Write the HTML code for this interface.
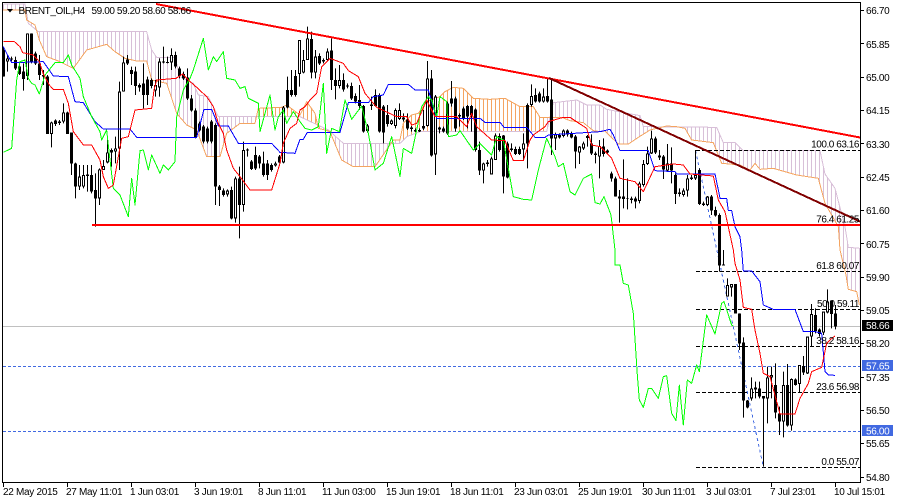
<!DOCTYPE html>
<html><head><meta charset="utf-8"><title>BRENT_OIL,H4</title>
<style>
html,body{margin:0;padding:0;background:#fff;width:900px;height:500px;overflow:hidden}
svg{display:block}
text{font-family:"Liberation Sans",Arial,sans-serif;font-size:10px;fill:#000}
.l{fill:none;stroke-width:3;stroke-linejoin:round;shape-rendering:crispEdges}
</style></head><body>
<svg width="900" height="500" viewBox="0 0 900 500" xmlns="http://www.w3.org/2000/svg">
<defs>
<pattern id="pt" patternUnits="userSpaceOnUse" width="12" height="3"><rect x="9" y="0" width="3" height="3" fill="#d8bfd8"/></pattern>
<pattern id="po" patternUnits="userSpaceOnUse" width="12" height="3"><rect x="9" y="0" width="3" height="3" fill="#f4a460"/></pattern>
<clipPath id="ct"><rect x="0" y="0" width="770" height="1500"/><rect x="960" y="0" width="240" height="1500"/><rect x="1640" y="0" width="1000" height="1500"/></clipPath>
<clipPath id="co"><rect x="770" y="0" width="190" height="1500"/><rect x="1200" y="0" width="440" height="1500"/></clipPath>
<clipPath id="pl"><rect x="3" y="3" width="857" height="479"/></clipPath>
<path id="cl" d="M5 30L75 30 80 60 105 75 118 120 140 170 175 183 220 205 260 150 320 133 345 155 375 175 410 183 440 183 455 240 500 250 530 340 560 375 590 390 620 470 660 470 680 400 720 370 765 370 775 325 845 322 860 315 900 345 920 305 945 340 955 385 975 390 990 395 1025 480 1060 500 1125 500 1180 420 1200 420 1210 370 1235 345 1255 340 1280 305 1320 290 1335 275 1360 262 1390 265 1420 295 1470 298 1515 295 1560 320 1600 320 1620 352 1685 352 1710 362 1750 368 1780 392 1800 395 1815 393 1855 432 1885 432 1915 412 1950 390 2000 378 2030 380 2055 385 2075 420 2140 428 2165 490 2220 495 2250 510 2265 490 2280 508 2320 505 2390 525 2455 535 2475 610 2515 680 2520 750 2538 825 2545 868 2570 875 2578 915 2580 745 2545 742 2535 680 2505 565 2475 522 2460 452 2230 452 2205 428 2170 428 2150 382 1930 380 1920 347 1820 328 1800 315 1760 315 1730 300 1660 308 1640 395 1260 395 1220 410 1200 430 1030 430 985 390 900 350 655 350 625 290 595 285 580 250 540 230 525 172 470 172 455 150 440 95 115 95 85 70 75 12 10 12Z"/>
</defs>
<rect width="900" height="500" fill="#fff"/>
<g clip-path="url(#pl)">
<!-- cloud -->
<g transform="scale(.33333)">
<g clip-path="url(#ct)"><use href="#cl" fill="url(#pt)" fill-rule="nonzero"/></g>
<g clip-path="url(#co)"><use href="#cl" fill="url(#po)" fill-rule="nonzero"/></g>
<polyline class="l" stroke="#d8bfd8" points="10,12 75,12 85,70 115,95 440,95 455,150 470,172 525,172 540,230 580,250 595,285 625,290 655,350 900,350 985,390 1030,430 1200,430 1220,410 1260,395 1640,395 1660,308 1730,300 1760,315 1800,315 1820,328 1920,347 1930,380 2150,382 2170,428 2205,428 2230,452 2460,452 2475,522 2505,565 2535,680 2545,742 2580,745"/>
<polyline class="l" stroke="#f4a460" points="5,30 75,30 80,60 105,75 118,120 140,170 175,183 220,205 260,150 320,133 345,155 375,175 410,183 440,183 455,240 500,250 530,340 560,375 590,390 620,470 660,470 680,400 720,370 765,370 775,325 845,322 860,315 900,345 920,305 945,340 955,385 975,390 990,395 1025,480 1060,500 1125,500 1180,420 1200,420 1210,370 1235,345 1255,340 1280,305 1320,290 1335,275 1360,262 1390,265 1420,295 1470,298 1515,295 1560,320 1600,320 1620,352 1685,352 1710,362 1750,368 1780,392 1800,395 1815,393 1855,432 1885,432 1915,412 1950,390 2000,378 2030,380 2055,385 2075,420 2140,428 2165,490 2220,495 2250,510 2265,490 2280,508 2320,505 2390,525 2455,535 2475,610 2515,680 2520,750 2538,825 2545,868 2570,875 2578,915"/>
</g>
<!-- horizontal levels -->
<g shape-rendering="crispEdges">
<path d="M3 326.5H860" stroke="#c0c0c0" stroke-width="1"/>
<path d="M3 366.5H860M3 431.5H860" stroke="#4169e1" stroke-width="1" stroke-dasharray="3 2"/>
<path d="M696 150.5H860M696 271.5H860M696 309.5H860M696 346.5H860M696 392.5H860M696 467.5H860" stroke="#000" stroke-width="1" stroke-dasharray="4 2"/>
<path d="M695.5 150.5L763.5 467.5" stroke="#4169e1" stroke-width="1" stroke-dasharray="3 3" fill="none"/>
</g>
<!-- candles -->
<g transform="scale(1,.33333)" fill="none" shape-rendering="crispEdges">
<path stroke="#000" stroke-width="1" d="M3.5 140V230M7.5 165V215M11.5 170V185M15.5 170V210M19.5 195V225M23.5 190V272M27.5 100V240M31.5 100V190M35.5 155V195M39.5 165V240M43.5 210V255M47.5 225V402M51.5 365V442M55.5 358V378M59.5 360V375M63.5 310V370M67.5 335V402M71.5 398V525M75.5 488V595M79.5 495V570M83.5 495V565M87.5 495V575M91.5 495V580M95.5 520V680M99.5 505V615M103.5 480V510M107.5 418V490M111.5 445V500M115.5 410V490M119.5 245V510M123.5 170V275M127.5 165V195M131.5 200V255M135.5 200V285M139.5 250V275M143.5 190V325M147.5 230V315M151.5 235V265M155.5 240V290M159.5 175V290M163.5 140V190M167.5 170V190M171.5 145V210M175.5 155V205M179.5 200V235M183.5 215V240M187.5 205V300M191.5 285V335M195.5 325V415M199.5 365V395M203.5 375V430M207.5 380V430M211.5 360V430M215.5 370V615M219.5 555V618M223.5 565V590M227.5 568V590M231.5 560V658M235.5 530V668M239.5 500V715M243.5 425V635M247.5 445V470M251.5 480V510M255.5 440V510M259.5 465V505M263.5 455V530M267.5 480V540M271.5 490V515M275.5 485V500M279.5 465V490M283.5 318V490M287.5 230V325M291.5 210V290M295.5 210V290M299.5 120V260M303.5 150V220M307.5 80V180M311.5 95V235M315.5 150V235M319.5 160V195M323.5 175V190M327.5 145V182M331.5 115V270M335.5 205V298M339.5 195V265M343.5 220V275M347.5 250V265M351.5 248V300M355.5 280V310M359.5 255V330M363.5 315V398M367.5 372V398M371.5 290V330M375.5 268V320M379.5 280V398M383.5 315V430M387.5 315V380M391.5 358V375M395.5 325V385M399.5 310V360M403.5 340V365M407.5 340V390M411.5 378V395M415.5 385V396M419.5 385V396M423.5 330V390M427.5 183V380M431.5 210V470M435.5 285V525M439.5 380V400M443.5 380V398M447.5 305V405M451.5 243V320M455.5 290V395M459.5 340V380M463.5 320V360M467.5 315V385M471.5 315V395M475.5 325V455M479.5 425V525M483.5 488V550M487.5 480V500M491.5 470V523M495.5 400V480M499.5 400V455M503.5 405V580M507.5 425V535M511.5 430V455M515.5 440V465M519.5 440V465M523.5 400V480M527.5 310V505M531.5 253V320M535.5 265V308M539.5 275V308M543.5 265V308M547.5 235V308M551.5 240V465M555.5 398V450M559.5 400V416M563.5 388V412M567.5 388V410M571.5 395V415M575.5 405V505M579.5 438V492M583.5 425V450M587.5 405V440M591.5 403V465M595.5 455V490M599.5 420V535M603.5 415V470M607.5 448V462M611.5 515V545M615.5 530V590M619.5 570V668M623.5 478V625M627.5 535V628M631.5 590V610M635.5 590V625M639.5 545V610M643.5 480V560M647.5 440V495M651.5 392V462M655.5 410V462M659.5 450V480M663.5 465V537M667.5 432V515M671.5 442V550M675.5 520V612M679.5 565V590M683.5 565V590M687.5 525V590M691.5 525V540M695.5 450V540M699.5 505V615M703.5 605V618M707.5 588V618M711.5 585V645M715.5 620V650M719.5 640V815M723.5 750V795M727.5 835V890M731.5 852V890M735.5 852V940M739.5 940V1050M743.5 1012V1253M747.5 1200V1225M751.5 1132V1202M755.5 1145V1195M759.5 1145V1195M763.5 1188V1400M767.5 1100V1270M771.5 1100V1195M775.5 1090V1255M779.5 1220V1305M783.5 1115V1312M787.5 1092V1280M791.5 1135V1292M795.5 1135V1157M799.5 1095V1178M803.5 1068V1125M807.5 1010V1122M811.5 912V1038M815.5 925V1000M819.5 985V1010M823.5 935V1005M827.5 868V940M831.5 905V985M835.5 915V988"/>
<path stroke="#000" stroke-width="3" d="M3.5 150V230M7.5 175V185M11.5 175V178M15.5 180V205M19.5 200V222M23.5 215V237M27.5 100V228M31.5 100V185M35.5 160V190M39.5 190V225M43.5 225V230M47.5 230V402M51.5 367V402M55.5 362V372M59.5 364V369M63.5 337V365M67.5 337V402M71.5 398V490M75.5 490V560M79.5 530V560M83.5 525V560M87.5 524V528M91.5 525V575M95.5 570V595M99.5 508V595M103.5 498V510M107.5 457V487M111.5 450V457M115.5 445V455M119.5 275V445M123.5 187V275M127.5 178V190M131.5 210V222M135.5 215V258M139.5 255V262M143.5 250V285M147.5 238V285M151.5 240V258M155.5 255V272M159.5 185V262M163.5 185V188M167.5 186V189M171.5 165V187M175.5 165V200M179.5 205V228M183.5 222V235M187.5 232V295M191.5 295V332M195.5 332V412M199.5 370V392M203.5 380V425M207.5 385V425M211.5 365V425M215.5 375V560M219.5 560V570M223.5 572V585M227.5 572V583M231.5 570V655M235.5 535V655M239.5 535V615M243.5 450V615M247.5 448V452M251.5 485V507M255.5 465V505M259.5 470V490M263.5 490V525M267.5 490V525M271.5 495V510M275.5 490V497M279.5 470V487M283.5 322V487M287.5 270V322M291.5 270V285M295.5 228V285M299.5 120V222M303.5 180V218M307.5 115V180M311.5 117V218M315.5 170V218M319.5 168V190M323.5 180V184M327.5 155V180M331.5 152V240M335.5 240V258M339.5 240V258M343.5 240V268M347.5 256V260M351.5 258V295M355.5 288V305M359.5 300V318M363.5 318V395M367.5 377V393M371.5 313V318M375.5 285V318M379.5 285V395M383.5 320V397M387.5 345V372M391.5 362V372M395.5 330V378M399.5 330V357M403.5 352V358M407.5 358V385M411.5 383V387M415.5 390V394M419.5 390V394M423.5 378V385M427.5 235V378M431.5 235V467M435.5 290V463M439.5 383V388M443.5 385V395M447.5 310V400M451.5 295V310M455.5 295V385M459.5 345V350M463.5 325V355M467.5 318V350M471.5 318V345M475.5 328V450M479.5 450V512M483.5 490V512M487.5 488V492M491.5 475V523M495.5 407V480M499.5 408V450M503.5 407V530M507.5 430V532M511.5 445V450M515.5 447V462M519.5 447V462M523.5 430V448M527.5 315V430M531.5 288V315M535.5 285V305M539.5 280V305M543.5 290V305M547.5 288V305M551.5 298V415M555.5 403V415M559.5 405V413M563.5 392V408M567.5 392V404M571.5 402V412M575.5 410V455M579.5 440V458M583.5 430V445M587.5 408V414M591.5 430V460M595.5 460V465M599.5 438V470M603.5 440V462M607.5 452V458M611.5 520V535M615.5 535V590M619.5 590V595M623.5 590V597M627.5 595V597M631.5 596V600M635.5 595V605M639.5 550V603M643.5 492V555M647.5 460V492M651.5 415V460M655.5 415V458M659.5 466V472M663.5 470V508M667.5 490V512M671.5 490V512M675.5 525V582M679.5 578V582M683.5 572V585M687.5 535V572M691.5 533V537M695.5 525V535M699.5 510V612M703.5 610V615M707.5 590V615M711.5 590V632M715.5 630V647M719.5 645V797M723.5 793V797M727.5 855V890M731.5 852V862M735.5 852V940M739.5 940V1030M743.5 1028V1202M747.5 1202V1222M751.5 1165V1195M755.5 1163V1168M759.5 1165V1190M763.5 1188V1195M767.5 1132V1195M771.5 1125V1132M775.5 1155V1238M779.5 1240V1265M783.5 1155V1265M787.5 1155V1277M791.5 1137V1277M795.5 1138V1155M799.5 1095V1152M803.5 1098V1118M807.5 1010V1120M811.5 942V1010M815.5 945V993M819.5 988V1002M823.5 935V998M827.5 905V937M831.5 902V942M835.5 940V980"/>
<path stroke="#fff" stroke-width="1" d="M7.5 178V182M27.5 103V225M51.5 370V399M63.5 340V362M79.5 533V557M83.5 528V557M99.5 511V592M103.5 501V507M107.5 460V484M115.5 448V452M119.5 278V442M123.5 190V272M155.5 258V269M159.5 188V259M171.5 168V184M227.5 575V580M235.5 538V652M243.5 453V612M275.5 493V494M283.5 325V484M299.5 123V219M303.5 183V215M307.5 118V177M315.5 173V215M327.5 158V177M339.5 243V255M367.5 380V390M391.5 365V369M395.5 333V375M399.5 333V354M427.5 238V375M435.5 293V460M483.5 493V509M491.5 478V520M495.5 410V477M523.5 433V445M531.5 291V312M543.5 293V302M555.5 406V412M563.5 395V405M579.5 443V455M583.5 433V442M599.5 441V467M639.5 553V600M643.5 495V552M647.5 463V489M651.5 418V457M667.5 493V509M683.5 575V582M687.5 538V569M695.5 528V532M707.5 593V612M727.5 858V887M731.5 855V859M751.5 1168V1192M767.5 1135V1192M771.5 1128V1129M783.5 1158V1262M791.5 1140V1274M799.5 1098V1149M807.5 1013V1117M811.5 945V1007M823.5 938V995M827.5 908V934"/>
</g>
<!-- ichimoku lines -->
<g transform="scale(.33333)">
<polyline class="l" stroke="#0000ff" points="10,140 20,160 35,188 130,185 160,228 205,230 225,305 250,308 285,365 310,387 390,387 410,412 590,412 612,328 635,328 655,378 685,378 715,430 815,430 840,457 885,460 900,418 910,418 922,397 1020,397 1045,308 1105,308 1120,290 1150,285 1165,253 1225,253 1245,270 1285,270 1310,355 1440,355 1455,367 1500,367 1512,382 1580,382 1605,412 1635,412 1645,405 1800,395 1830,388 1840,405 1860,452 1945,452 1965,512 2025,515 2030,522 2145,522 2155,570 2160,595 2180,595 2185,632 2195,632 2205,680 2220,710 2225,750 2230,813 2255,813 2280,845 2290,915 2320,928 2385,928 2410,995 2445,995 2465,1000 2475,1115 2485,1125 2505,1126"/>
<polyline class="l" stroke="#00ff00" points="10,457 35,445 50,240 60,185 75,180 85,235 95,250 105,255 118,282 135,225 165,188 190,188 205,165 215,195 240,235 250,290 275,350 300,395 305,420 320,390 330,480 340,565 360,585 385,650 395,535 405,615 420,452 430,450 445,510 455,465 480,520 490,495 505,510 525,485 530,350 550,270 570,235 580,210 610,115 625,210 640,170 650,185 670,155 680,235 705,240 720,265 735,260 745,295 775,310 780,395 810,285 825,390 835,350 850,330 860,370 880,335 900,365 915,385 935,390 955,380 970,250 980,460 995,385 1018,395 1035,300 1055,358 1085,318 1105,400 1125,510 1150,490 1175,410 1200,530 1210,445 1235,460 1265,320 1285,290 1295,300 1310,350 1320,290 1340,305 1345,410 1370,405 1380,392 1420,450 1440,430 1475,465 1490,410 1510,420 1540,590 1570,598 1595,600 1615,510 1640,415 1665,470 1675,500 1690,490 1710,575 1725,585 1750,535 1775,522 1785,608 1800,612 1812,590 1833,645 1845,750 1845,795 1860,795 1870,850 1885,855 1900,940 1912,1125 1918,1200 1930,1222 1945,1165 1955,1165 1975,1195 1990,1130 2000,1127 2015,1240 2028,1262 2038,1155 2050,1275 2062,1140 2075,1150 2090,1095 2098,1115 2120,945 2145,1002 2165,910 2172,905 2195,975 2200,978"/>
<polyline class="l" stroke="#ff0000" points="10,124 42,124 60,140 68,158 100,165 118,185 130,222 148,255 160,268 190,268 205,310 220,395 250,435 275,435 300,480 310,530 325,565 340,555 355,470 365,415 385,410 405,330 455,325 462,270 470,240 528,235 548,222 565,240 590,262 620,290 640,320 655,370 670,400 680,450 700,505 720,530 750,570 815,570 840,490 850,430 870,385 890,370 900,330 915,320 930,300 950,280 965,200 990,175 1030,190 1045,212 1075,230 1095,280 1130,322 1190,350 1220,350 1235,375 1250,370 1280,300 1305,350 1370,350 1400,380 1415,340 1430,380 1475,420 1515,422 1540,482 1570,482 1590,420 1600,405 1635,380 1645,365 1690,352 1710,352 1740,372 1760,385 1775,435 1800,440 1820,460 1835,475 1860,535 1905,545 1930,575 1965,500 2020,492 2050,495 2070,522 2140,528 2155,600 2175,635 2200,750 2205,790 2220,840 2230,922 2255,928 2265,990 2280,1060 2290,1120 2310,1130 2340,1242 2385,1242 2400,1195 2425,1150 2435,1115 2465,1102 2480,1030 2490,1020 2505,1008"/>
</g>
<!-- trendlines -->
<g fill="none" shape-rendering="crispEdges">
<path d="M156 4L860 137.5" stroke="#ff0000" stroke-width="2"/>
<path d="M549 78L860 221.5" stroke="#800000" stroke-width="2"/>
<path d="M92 225H860" stroke="#ff0000" stroke-width="2"/>
</g>
</g>
<!-- title -->
<path d="M7 9H13L10 12.5Z" fill="#000"/>
<g style="letter-spacing:-.4px">
<text x="18.5" y="14">BRENT_OIL,H4</text>
<text x="91.5" y="14">59.00 59.20 58.60 58.66</text>
</g>
<!-- fib labels -->
<g text-anchor="end" style="letter-spacing:-.45px">
<text x="859" y="147.5">100.0 63.16</text>
<text x="859" y="222.5">76.4 61.25</text>
<text x="859" y="269">61.8 60.07</text>
<text x="859" y="307">50.0 59.11</text>
<text x="859" y="344">38.2 58.16</text>
<text x="859" y="390">23.6 56.98</text>
<text x="859" y="465">0.0 55.07</text>
</g>
<!-- frame -->
<g shape-rendering="crispEdges" fill="none" stroke="#000" stroke-width="1">
<path d="M2.5 2.5H860.5V482.5H2.5Z"/>
<path d="M860 10.5H864M860 43.5H864M860 77.5H864M860 110.5H864M860 143.5H864M860 177.5H864M860 210.5H864M860 243.5H864M860 277.5H864M860 310.5H864M860 343.5H864M860 377.5H864M860 410.5H864M860 443.5H864M860 477.5H864"/>
<path d="M3.5 482V487M67.5 482V487M131.5 482V487M195.5 482V487M259.5 482V487M323.5 482V487M387.5 482V487M451.5 482V487M515.5 482V487M579.5 482V487M643.5 482V487M707.5 482V487M771.5 482V487M835.5 482V487"/>
</g>
<!-- price axis -->
<g style="letter-spacing:-.35px">
<text x="866" y="14">66.70</text>
<text x="866" y="48">65.85</text>
<text x="866" y="81">65.00</text>
<text x="866" y="114">64.15</text>
<text x="866" y="148">63.30</text>
<text x="866" y="181">62.45</text>
<text x="866" y="214">61.60</text>
<text x="866" y="248">60.75</text>
<text x="866" y="281">59.90</text>
<text x="866" y="314">59.05</text>
<text x="866" y="347">58.20</text>
<text x="866" y="381">57.35</text>
<text x="866" y="414">56.50</text>
<text x="866" y="447">55.65</text>
<text x="866" y="481">54.80</text>
</g>
<g shape-rendering="crispEdges">
<rect x="862" y="320" width="31" height="11" fill="#000"/>
<rect x="862" y="360" width="31" height="11" fill="#4169e1"/>
<rect x="862" y="425" width="31" height="11" fill="#4169e1"/>
</g>
<g style="letter-spacing:-.35px">
<text x="866" y="329" style="fill:#fff">58.66</text>
<text x="866" y="369.5" style="fill:#fff">57.65</text>
<text x="866" y="434.5" style="fill:#fff">56.00</text>
</g>
<!-- time axis -->
<g style="letter-spacing:-.3px">
<text x="3" y="495">22 May 2015</text>
<text x="66" y="495">27 May 11:01</text>
<text x="130" y="495">1 Jun 03:01</text>
<text x="194" y="495">3 Jun 19:01</text>
<text x="258" y="495">8 Jun 11:01</text>
<text x="322" y="495">11 Jun 03:00</text>
<text x="386" y="495">15 Jun 19:01</text>
<text x="450" y="495">18 Jun 11:01</text>
<text x="514" y="495">23 Jun 03:01</text>
<text x="578" y="495">25 Jun 19:01</text>
<text x="642" y="495">30 Jun 11:01</text>
<text x="706" y="495">3 Jul 03:01</text>
<text x="770" y="495">7 Jul 23:01</text>
<text x="834" y="495">10 Jul 15:01</text>
</g>
</svg>
</body></html>
